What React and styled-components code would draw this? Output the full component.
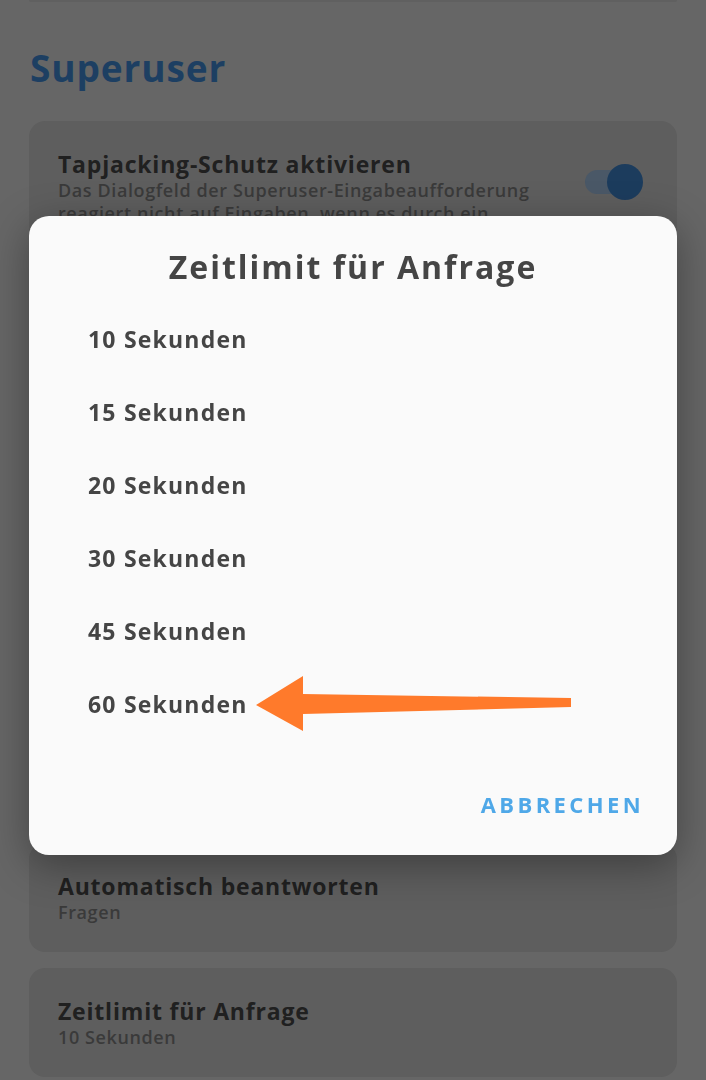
import React from "react";
import styled, { createGlobalStyle } from "styled-components";

const Global = createGlobalStyle`
  html, body { margin: 0; padding: 0; background: #666666; }
  body { font-family: "Open Sans", "Noto Sans", sans-serif; overflow: hidden; }
`;

const Page = styled.div`
  width: 706px;
  height: 1080px;
  overflow: hidden;
  padding: 0 29px;
  box-sizing: border-box;
`;

const StubCard = styled.div`
  height: 2px;
  background: #606060;
  border-radius: 0 0 16px 16px;
`;

const SectionTitle = styled.h2`
  margin: 0 0 31px;
  padding: 44px 0 0 1px;
  height: 44px;
  line-height: 44px;
  font-size: 37px;
  font-weight: 700;
  color: #1d3f62;
  letter-spacing: 0.9px;
`;

const CardList = styled.div`
  display: flex;
  flex-direction: column;
  gap: 16px;
`;

const Card = styled.div`
  background: #5e5e5e;
  border-radius: 16px;
  padding: 28px 29px;
  min-height: ${(p) => p.$minHeight || 0}px;
  box-sizing: border-box;
  display: flex;
  align-items: flex-start;
  gap: 20px;
  flex: none;
`;

const CardText = styled.div`
  flex: 1;
  display: flex;
  flex-direction: column;
`;

const CardTitle = styled.div`
  font-size: 23px;
  line-height: 30px;
  font-weight: 700;
  color: #202020;
  letter-spacing: 0.8px;
  white-space: nowrap;
`;

const CardSub = styled.div`
  font-size: 18px;
  line-height: 23px;
  font-weight: 600;
  color: #3a3a3a;
  letter-spacing: 0.6px;
`;

const Toggle = styled.div`
  position: relative;
  width: 58px;
  height: 36px;
  flex: none;
  margin-top: 14px;
  margin-right: 5px;
`;

const Track = styled.div`
  position: absolute;
  left: 0;
  top: 7px;
  width: 46px;
  height: 24px;
  border-radius: 12px;
  background: #4a5867;
`;

const Thumb = styled.div`
  position: absolute;
  right: 0;
  top: 1px;
  width: 36px;
  height: 36px;
  border-radius: 50%;
  background: #1c3c5d;
`;

const Scrim = styled.div`
  position: fixed;
  inset: 0;
  display: flex;
  justify-content: center;
  align-items: flex-start;
  padding-top: 216px;
`;

const Dialog = styled.div`
  position: relative;
  width: 648px;
  height: 639px;
  box-sizing: border-box;
  background: #fafafa;
  border-radius: 20px;
  box-shadow: 0 10px 40px rgba(0, 0, 0, 0.35);
  padding: 24px 37px 27px 59px;
  display: flex;
  flex-direction: column;
`;

const DialogTitle = styled.div`
  font-size: 32px;
  line-height: 54px;
  font-weight: 700;
  color: #454545;
  text-align: center;
  margin-left: -22px;
  letter-spacing: 2px;
`;

const Options = styled.div`
  margin-top: 8px;
  display: flex;
  flex-direction: column;
`;

const Option = styled.div`
  height: 73px;
  display: flex;
  align-items: center;
  font-size: 23px;
  font-weight: 700;
  color: #454545;
  letter-spacing: 1.2px;
`;

const Footer = styled.div`
  margin-top: auto;
  display: flex;
  justify-content: flex-end;
`;

const TextButton = styled.div`
  height: 48px;
  margin-right: -4px;
  display: flex;
  align-items: center;
  font-size: 22px;
  font-weight: 700;
  letter-spacing: 3.4px;
  color: #4fa8e8;
`;

const Arrow = styled.svg`
  position: absolute;
  left: 0;
  top: 0;
  pointer-events: none;
`;

const options = [10, 15, 20, 30, 45, 60];

const settings = [
  ["Authentifizierung", "Biometrische Authentifizierung"],
  ["Superuser-Zugriff", "Apps und ADB"],
  ["Mehrbenutzermodus", "Nur Geräteeigentümer"],
  ["Mount-Namespace-Modus", "Globaler Namespace"],
  ["Automatisch beantworten", "Fragen"],
  ["Zeitlimit für Anfrage", "10 Sekunden"],
];

export default function App() {
  return (
    <>
      <Global />
      <Page>
        <StubCard />
        <SectionTitle>Superuser</SectionTitle>
        <CardList>
          <Card $minHeight={206}>
            <CardText>
              <CardTitle>Tapjacking-Schutz aktivieren</CardTitle>
              <CardSub>
                Das Dialogfeld der Superuser-Eingabeaufforderung reagiert nicht auf
                Eingaben, wenn es durch ein anderes Fenster oder Overlay verdeckt wird
              </CardSub>
            </CardText>
            <Toggle>
              <Track />
              <Thumb />
            </Toggle>
          </Card>
          {settings.map(([title, sub]) => (
            <Card key={title}>
              <CardText>
                <CardTitle>{title}</CardTitle>
                <CardSub>{sub}</CardSub>
              </CardText>
            </Card>
          ))}
        </CardList>
      </Page>
      <Scrim>
        <Dialog>
          <DialogTitle>Zeitlimit für Anfrage</DialogTitle>
          <Options>
            {options.map((s) => (
              <Option key={s}>{s} Sekunden</Option>
            ))}
          </Options>
          <Footer>
            <TextButton>ABBRECHEN</TextButton>
          </Footer>
          <Arrow width="648" height="639" viewBox="0 0 648 639">
            <polygon
              points="227,489 274,460 274,478 542,482 542,491 274,498 274,515"
              fill="#ff7a2b"
            />
          </Arrow>
        </Dialog>
      </Scrim>
    </>
  );
}
